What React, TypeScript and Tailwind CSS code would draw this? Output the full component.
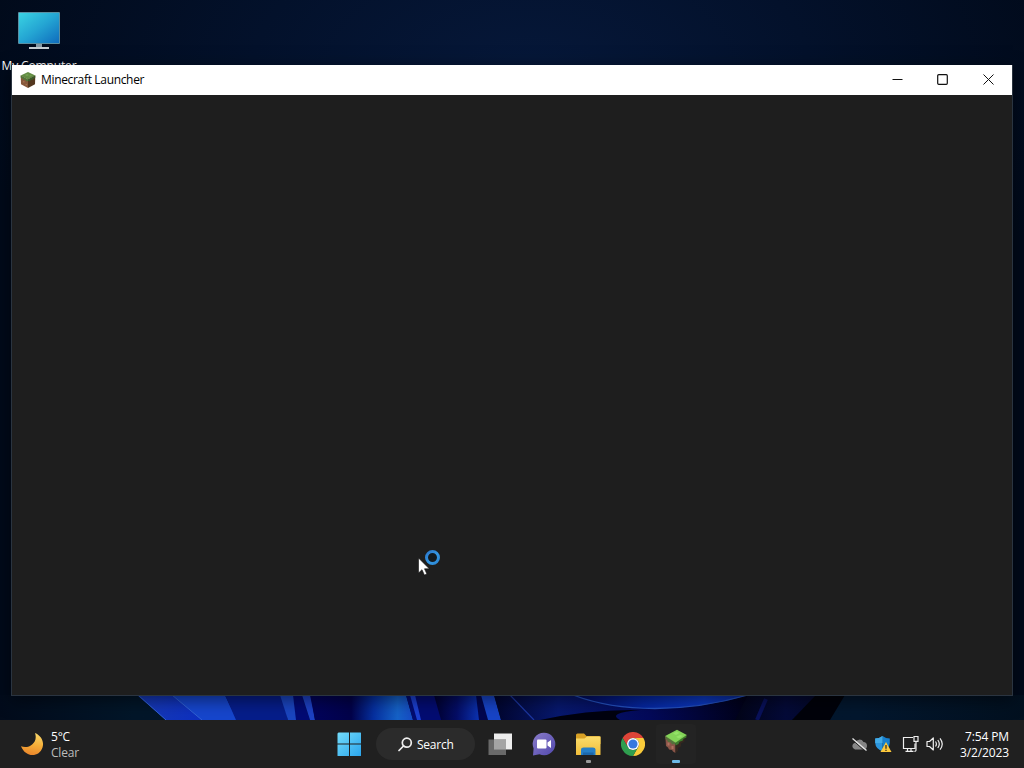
import clsx from "clsx";
import type { ReactNode } from "react";

const Wallpaper = () => (
  <svg className="absolute bottom-0 left-0 h-[25px] w-[1024px]" viewBox="0 0 1024 25" preserveAspectRatio="none">
    <defs>
      <linearGradient id="base" x1="0" x2="1">
        <stop offset="0" stopColor="#020b1b" />
        <stop offset="0.13" stopColor="#021629" />
        <stop offset="0.84" stopColor="#03172e" />
        <stop offset="1" stopColor="#02101f" />
      </linearGradient>
      <linearGradient id="petalA" x1="0" x2="1">
        <stop offset="0" stopColor="#173ab5" />
        <stop offset="1" stopColor="#0d2fc0" />
      </linearGradient>
      <linearGradient id="petalB" x1="0" x2="1">
        <stop offset="0" stopColor="#02035c" />
        <stop offset="0.4" stopColor="#02024a" />
        <stop offset="0.62" stopColor="#0630a0" />
        <stop offset="0.85" stopColor="#1562c8" />
        <stop offset="1" stopColor="#164ac4" />
      </linearGradient>
      <linearGradient id="petalC" x1="0" x2="1">
        <stop offset="0" stopColor="#01012f" />
        <stop offset="0.5" stopColor="#040d66" />
        <stop offset="1" stopColor="#0c34b4" />
      </linearGradient>
      <linearGradient id="petalD" x1="0" x2="1">
        <stop offset="0" stopColor="#01052e" />
        <stop offset="0.25" stopColor="#07186e" />
        <stop offset="0.6" stopColor="#03095a" />
        <stop offset="1" stopColor="#010116" />
      </linearGradient>
      <linearGradient id="bowl" x1="0" x2="1">
        <stop offset="0" stopColor="#020a58" />
        <stop offset="0.4" stopColor="#0526a0" />
        <stop offset="0.75" stopColor="#0c38c0" />
        <stop offset="1" stopColor="#0a2a98" />
      </linearGradient>
      <linearGradient id="edge" x1="0" x2="1">
        <stop offset="0" stopColor="#020418" />
        <stop offset="0.6" stopColor="#040a38" />
        <stop offset="1" stopColor="#03082a" />
      </linearGradient>
    </defs>
    <path d="M0 0H1024V25H0z" fill="url(#base)" />
    <path d="M137 0H174L203 25H166z" fill="url(#petalA)" />
    <path d="M172 0H225L237 25H202z" fill="#1646cd" />
    <path d="M172 0L202 25M138 0L166 25" stroke="#3263d4" strokeWidth="1" />
    <path d="M225 0H282L288 25H236z" fill="#061d8a" />
    <path d="M280 0H294L297 25H288z" fill="#1a45c0" />
    <path d="M293 0H302L310 25H296z" fill="#020a74" />
    <path d="M302 0H311L315 25H310z" fill="#1d41c4" />
    <path d="M310 0H406L413 25H315z" fill="url(#petalB)" />
    <path d="M406 0H436L442 25H413z" fill="#030c72" />
    <path d="M410 0H415L421 25H417z" fill="#1b3fd0" />
    <path d="M434 0H477L480 25H441z" fill="url(#petalC)" />
    <path d="M476 0H482L488 25H479z" fill="#020650" />
    <path d="M481 0H494L501 25H488z" fill="#1744c8" />
    <path d="M494 0H751L745 25H501z" fill="url(#petalD)" />
    <path d="M510 0L534 25" stroke="#1c36a0" strokeWidth="1.2" />
    <path d="M540 25Q590 14 640 15Q606 18 620 25z" fill="#01020f" />
    <path d="M573 0C620 18 686 18 748 0z" fill="url(#bowl)" />
    <path d="M573 0C620 18 686 18 748 0" fill="none" stroke="#2450bd" strokeWidth="1.3" />
    <path d="M748 0H820L797 25H735z" fill="url(#edge)" />
    <path d="M766 4L757 25" stroke="#09115a" strokeWidth="4" />
    <path d="M816 0H845L830 25H792z" fill="#01020a" />
  </svg>
);

const GrassBlock = ({ className }: { className: string }) => (
  <svg className={className} viewBox="0 0 16 16">
    <path d="M8 0L15.3 3.500 8 7.500 0.700 3.500z" fill="#628c43" />
    <path d="M0.700 3.500L8 7.500V16L1 12.300z" fill="#87583b" />
    <path d="M15.300 3.500L8 7.500V16L15 12.300z" fill="#54371f" />
    <path d="M0.700 3.500L8 7.500V9L6.500 9.400 5 7.500 3.500 7.800 2 6 .8 6z" fill="#50763a" />
    <path d="M15.300 3.500L8 7.500V9l2 .3 1-1.600 2 .1 1-1.600 1.200-.2z" fill="#3c5a2a" />
    <path d="M3 9h1.500v1.500H3zM5.500 12H7v1.300H5.500z" fill="#a2714d" />
    <path d="M5 3l2-1 2 1-2 1zM9 4l2-1 1 .6-2 1z" fill="#78a354" />
  </svg>
);

const MyComputer = () => (
  <div className="absolute top-[11px] left-0 flex w-[78px] flex-col items-center text-[12px] text-white">
    <svg className="h-[40px] w-[44px]" viewBox="0 0 44 40">
      <defs>
        <linearGradient id="screen" x1="0" y1="0" x2="1" y2="1">
          <stop offset="0" stopColor="#3ad3e2" />
          <stop offset="0.5" stopColor="#24a5d3" />
          <stop offset="1" stopColor="#0f6cbd" />
        </linearGradient>
      </defs>
      <rect x="1" y="1" width="42" height="32" rx="1" fill="#5a8fa2" />
      <rect x="2" y="2" width="40" height="30" fill="url(#screen)" />
      <path d="M19 33h6v3h-6z" fill="#8498a4" />
      <path d="M12 36h20v2H12z" fill="#c3ccd2" />
    </svg>
    <span className="mt-[6px] leading-[18px] tracking-[-0.15px]">My Computer</span>
  </div>
);

const LauncherWindow = () => (
  <div className="absolute top-[65px] left-[11px] flex h-[631px] w-[1002px] flex-col border border-t-0 border-[#2a3440] bg-[#1e1e1e] shadow-[0_4px_16px_rgba(0,0,0,0.5)]">
    <div className="flex h-[30px] items-center bg-white pl-2 text-black">
      <GrassBlock className="mb-px h-4 w-4" />
      <span className="ml-[5px] flex-1 text-[12px] leading-[30px] tracking-[-0.33px]">Minecraft Launcher</span>
      <div className="flex h-full">
        <div className="flex w-[46px] items-center justify-center">
          <svg className="mb-px h-[11px] w-[11px]" viewBox="0 0 11 11" stroke="#111" fill="none">
            <path d="M.5 5.5h10" />
          </svg>
        </div>
        <div className="flex w-[45px] items-center justify-center">
          <svg className="mb-px h-[11px] w-[11px]" viewBox="0 0 11 11" stroke="#111" strokeWidth="1.2" fill="none">
            <rect x=".7" y=".7" width="9.6" height="9.6" rx="1" />
          </svg>
        </div>
        <div className="flex w-[47px] items-center justify-center">
          <svg className="mb-px h-[11px] w-[11px]" viewBox="0 0 11 11" stroke="#111" fill="none">
            <path d="M.5.5l10 10M10.5.5l-10 10" />
          </svg>
        </div>
      </div>
    </div>
  </div>
);

const Cursor = () => (
  <svg className="absolute top-[548px] left-[416px] h-[32px] w-[28px]" viewBox="0 0 28 32">
    <defs>
      <linearGradient id="ring" x1="0" y1="0" x2="1" y2="1">
        <stop offset="0" stopColor="#2b78cc" />
        <stop offset="0.55" stopColor="#3497e3" />
        <stop offset="1" stopColor="#2b86d2" />
      </linearGradient>
    </defs>
    <circle cx="16.5" cy="9.5" r="6" fill="#121a20" stroke="url(#ring)" strokeWidth="3" />
    <path d="M2.500 10V25L6 21.700l2.400 5.400 2.500-1.100-2.400-5.200h4.800z" fill="#fff" stroke="#111" strokeWidth=".6" />
  </svg>
);

const Weather = () => (
  <div className="flex w-[337px] items-center pl-[20px]">
    <svg className="h-6 w-6" viewBox="0 0 24 24">
      <defs>
        <linearGradient id="moon" x1="0.5" y1="0" x2="0.3" y2="1">
          <stop offset="0" stopColor="#f8d568" />
          <stop offset="0.5" stopColor="#f6ae38" />
          <stop offset="1" stopColor="#e9832b" />
        </linearGradient>
      </defs>
      <path d="M15 1C21 3.5 24.3 9.3 22.6 15.2C19.2 25.7 5.6 26 1 14.3C8.5 17.5 18.5 11 15 1z" fill="url(#moon)" />
    </svg>
    <div className="mt-[2px] ml-[7px] text-[12px] leading-4 tracking-[-0.2px]">
      <div className="text-white">5°C</div>
      <div className="text-[#bcbcbc]">Clear</div>
    </div>
  </div>
);

const TaskItem = ({ children, active, bar }: { children: ReactNode; active?: boolean; bar?: string }) => (
  <div
    className={clsx("relative flex h-10 w-10 items-center justify-center rounded", {
      "bg-[#232323]": active,
    })}
  >
    {children}
    {bar && <div className={clsx("absolute bottom-px h-[3px] rounded-[1px]", bar)} />}
  </div>
);

const Taskbar = () => (
  <div className="relative flex h-12 items-center bg-[#202020] text-white">
    <Weather />
    <svg className="h-6 w-6" viewBox="0 0 24 24">
      <defs>
        <linearGradient id="win" x1="0" y1="0" x2="1" y2="1">
          <stop offset="0" stopColor="#73dcfb" />
          <stop offset="1" stopColor="#2ba5ec" />
        </linearGradient>
      </defs>
      <path d="M1.5.5H12v11H.5v-10zM13 .5h10.5q.5 0 .5.5v10.500H13zM.5 12.500H12V24H1q-.5 0-.5-.5zM13 12.500h11V23.500q0 .5-.5.5H13z" fill="url(#win)" />
    </svg>
    <div className="ml-[15px] flex h-8 w-[99px] items-center rounded-full bg-[#2b2b2b] pl-[22px]">
      <svg className="h-[15px] w-[15px]" viewBox="0 0 15 15" fill="none" stroke="#eee" strokeWidth="1.7">
        <circle cx="8.800" cy="5.700" r="4.500" />
        <path d="M5.500 9L1 13.500" strokeLinecap="round" />
      </svg>
      <span className="mt-[2px] ml-[4px] text-[12px] tracking-[-0.25px]">Search</span>
    </div>
    <div className="ml-[5px] flex gap-x-1">
      <TaskItem>
        <svg className="h-6 w-6" viewBox="0 0 24 24">
          <path d="M6 1.500h18v16H6z" fill="#ededed" />
          <path d="M.5 7.500h17.500v15.500H.5z" fill="#707070" fillOpacity=".92" />
          <path d="M6 7.500h12v10H6z" fill="#a4a4a4" />
        </svg>
      </TaskItem>
      <TaskItem>
        <svg className="h-6 w-6" viewBox="0 0 24 24">
          <defs>
            <linearGradient id="chat" x1="0" y1="0" x2="1" y2="1">
              <stop offset="0" stopColor="#8a7cc9" />
              <stop offset="1" stopColor="#5148ad" />
            </linearGradient>
          </defs>
          <path d="M12 .8A11.200 11.200 0 1 1 7.500 22.200L1 23.400 1.600 16.500A11.200 11.200 0 0 1 12 .8z" fill="url(#chat)" />
          <rect x="5" y="7.500" width="9.500" height="9" rx="1" fill="#fff" />
          <path d="M15.500 10.500L19 8v8l-3.500-2.500z" fill="#fff" />
        </svg>
      </TaskItem>
      <TaskItem bar="w-[5px] bg-[#9a9a9a]">
        <svg className="h-6 w-[26px]" viewBox="0 0 26 24">
          <defs>
            <linearGradient id="folder" x1="0" y1="0" x2="0" y2="1">
              <stop offset="0" stopColor="#fbdd6c" />
              <stop offset="1" stopColor="#f0bd3a" />
            </linearGradient>
          </defs>
          <path d="M1 3q0-1.500 1.500-1.500H9l2.500 2.500H24q1.500 0 1.500 1.500V12H1z" fill="#d9a125" />
          <path d="M1 6.500h8.500L12 4.500h13.500V22.500q0 .5-.5.5H1.500q-.5 0-.5-.5z" fill="url(#folder)" />
          <path d="M6 23V17.500q0-2 2.500-2h9.500q2.500 0 2.500 2v5.500z" fill="#267fc6" />
          <path d="M8 20.500h10.500v2.500H8z" fill="#1c67a9" />
        </svg>
      </TaskItem>
      <TaskItem>
        <svg className="ml-px h-6 w-6" viewBox="0 0 24 24">
          <path d="M1.600 6A12 12 0 0 1 22.400 6H12a6 6 0 0 0-5.200 9z" fill="#dd4438" />
          <path d="M22.400 6A12 12 0 0 1 12 24l5.200-9A6 6 0 0 0 12 6z" fill="#f9cb3a" />
          <path d="M12 24A12 12 0 0 1 1.600 6l5.200 9a6 6 0 0 0 10.400 0z" fill="#2f9e4f" />
          <circle cx="12" cy="12" r="6" fill="#fff" />
          <circle cx="12" cy="12" r="4.600" fill="#3878df" />
        </svg>
      </TaskItem>
      <TaskItem active bar="w-2 bg-[#6cb8e6]">
        <svg className="mb-[7px] h-6 w-6" viewBox="0 0 24 24">
          <path d="M1.300 7L11.500 13.500V24L9 22.500 8 21 5 20.500 4 18.500 2 17z" fill="#8a5548" />
          <path d="M22.500 6L11.500 13.500V24l2.500-2v-3l3-1.500v-3l3.500-2V10l2-1z" fill="#35271f" />
          <path d="M1.300 7L11.500 13.500v2.200l-2-1-1 1-2-2.500-2 .3-1.500-2.500L1.500 10z" fill="#55703c" />
          <path d="M22.500 6L11.500 13.500v3l3-1.500 1-2.200 3-1 1-2 2.800-1.300z" fill="#3c7a2c" />
          <path d="M13 .8L22.800 6 11.500 13.800 1.200 7z" fill="#83d358" />
          <path d="M12.500 2.500l3 1.500-3.500 2-3-1.500zM16 6l3 .8-4 2.700-3-1.700z" fill="#94e268" />
          <path d="M3.500 13.500h2v3h-2zM7.500 17h2v3h-2z" fill="#b0705f" />
        </svg>
      </TaskItem>
    </div>
    <div className="ml-auto flex items-center pr-[15px]">
      <svg className="h-[16px] w-[17px]" viewBox="0 0 17 16">
        <path d="M4 13.500a3.500 3.500 0 0 1 0-6.800A4.700 4.700 0 0 1 12.500 6a3.800 3.800 0 0 1 .5 7.500z" fill="#858585" />
        <path d="M1 3.500l13.500 12" stroke="#202020" strokeWidth="1" />
        <path d="M1.500 2.500l14 12" stroke="#e5e5e5" strokeWidth="1.300" />
      </svg>
      <svg className="ml-[7px] h-[18px] w-[17px]" viewBox="0 0 17 18">
        <path d="M7.500 1Q11 3.500 14.800 3.500V8Q14.500 13.500 7.500 16.500z" fill="#1780cf" />
        <path d="M7.500 1Q4 3.500.2 3.500V8Q.5 13.500 7.500 16.500z" fill="#2b95dc" />
        <path d="M7.500 1Q4 3.500.2 3.500V8H7.500z" fill="#42abe8" />
        <path d="M11 7L16.500 17h-11z" fill="#fdc83b" />
        <path d="M11 10v3.800M11 14.800v1.200" stroke="#2a251a" strokeWidth="1.200" />
      </svg>
      <svg className="ml-[10px] h-[18px] w-[17px]" viewBox="0 0 17 18" fill="none" stroke="#efefef" strokeWidth="1.200">
        <path d="M11 2.500H1.500v11h11.500V8.500M5.500 13.500v2.900M9 13.500v2.900M3.500 16.400h8" />
        <path d="M12 1.500h4v4.800h-4zM14 6.300v9q0 1.100-1.600 1.100" />
      </svg>
      <svg className="ml-[7px] h-[16px] w-[18px]" viewBox="0 0 18 16" fill="none" stroke="#efefef" strokeWidth="1.200">
        <path d="M1 5.500h2.500L7.300 2v12L3.500 10.500H1z" strokeLinejoin="round" />
        <path d="M9.500 5.500q1.800 2.500 0 5M11.800 4q3 4 0 8M14 2.300q4.500 5.700 0 11.400" />
      </svg>
      <div className="mt-[2px] ml-[16px] text-right text-[12px] leading-4 tracking-[-0.12px]">
        <div>7:54 PM</div>
        <div>3/2/2023</div>
      </div>
    </div>
  </div>
);

const App = () => {
  return (
    <div className="relative flex h-screen w-full flex-col overflow-hidden bg-[#010919] font-['Open_Sans','Noto_Sans',sans-serif] select-none">
      <div className="relative flex-1 bg-[radial-gradient(ellipse_560px_330px_at_530px_80px,#06183a_0%,#03112b_50%,#010a1a_100%)]">
        <Wallpaper />
        <MyComputer />
        <LauncherWindow />
      </div>
      <Taskbar />
      <Cursor />
    </div>
  );
};

export default App;
